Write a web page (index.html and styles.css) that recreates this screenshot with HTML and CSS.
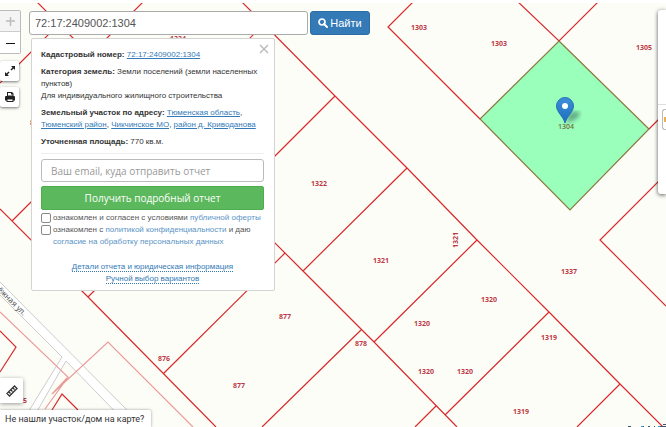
FILE: index.html
```
<!DOCTYPE html>
<html lang="ru">
<head>
<meta charset="utf-8">
<title>Кадастровая карта</title>
<link rel="stylesheet" href="styles.css">
</head>
<body>
<main class="app">
  <svg class="map" width="666" height="427" viewBox="0 0 666 427" role="img" aria-label="Карта участков">
    <g class="road">
      <path class="road-fill" d="M0 282 127 410 144 427H130L66 361 38 409 28 427H19L62 357 0 295Z"/>
      <path class="road-edge" d="M0 282 144 427M0 295 62 357 19 427M130 427 66 361 28 427"/>
    </g>
    <text class="street" transform="translate(-3 290) rotate(45)">ёжная ул.</text>
    <path class="parcel-faint" d="M0 312 68 377 45 409M52 394 108 342 193 427M52 394 68 377"/>
    <path class="parcel" d="M240 0 335 96 407 168 477 240 549 312 620 384 663 427M335 96 275 156 220 210M407 168 303 271M220 188 303 271 374 342 457 427M285 253 163 374M477 240 374 342M361 330 262 427M549 312 445 415M436 406 415 427M620 384 577 427M0 209 88 297 216 427M12 221 90 143M88 297 130 255M145 0 90 55M35 0 90 55M59 24 0 83M264 24 220 68M415 0 388 27 480 119M516 0 559 41 600 0M649 129 666 112M666 174 600 240 666 306M0 331 16 347 0 372M52 410 62 394 78 410"/>
    <path class="selected" d="M559 41 649 129 570 210 480 119Z"/>
    <g class="labels">
      <text x="419" y="30">1303</text><text x="499" y="46">1303</text><text x="644" y="50">1305</text>
      <text x="178" y="41">1324</text><text x="319" y="186">1322</text><text x="381" y="263">1321</text>
      <text transform="translate(458 240) rotate(-90)">1321</text>
      <text x="569" y="274">1337</text><text x="489" y="302">1320</text><text x="422" y="326">1320</text>
      <text x="549" y="340">1319</text><text x="426" y="374">1320</text><text x="465" y="374">1320</text>
      <text x="521" y="414">1319</text><text x="285" y="319">877</text><text x="239" y="388">877</text>
      <text x="361" y="346">878</text><text x="164" y="361">876</text><text x="21" y="403">875</text><text x="32" y="125">8</text>
    </g>
    <text class="label-selected" x="566" y="129">1304</text>
    <path stroke="#456" d="M628 426.500H631M641 426.500H644M648 426.500H650M654 426.500H655M658 426.500H666M663 424.500H666"/>
    <path stroke="#29a3d0" d="M641 426.500H643M658 426.500H660"/>
    <defs>
      <linearGradient id="pin" x2="0" y2="1"><stop stop-color="#3c8fd8"/><stop offset="1" stop-color="#1d6dbd"/></linearGradient>
      <filter id="soft"><feGaussianBlur stdDeviation="2"/></filter>
    </defs>
    <path filter="url(#soft)" fill="#244" opacity=".45" d="M566 123 569 114Q576 109 580 113 580 119 566 123Z"/>
    <path fill="url(#pin)" stroke="#2a72b5" d="M565 123C563 116 556.500 112 556.500 106A8.500 8.500 0 0 1 573.500 106C573.500 112 567 116 565 123Z"/>
    <circle cx="565" cy="106" r="3" fill="#fff"/>
  </svg>

  <nav class="tools" aria-label="Инструменты карты">
    <div class="zoom">
      <button class="tool tool-off" disabled aria-label="Приблизить"><svg width="10" height="10"><path d="M1 5H10M5.500 1V10" stroke="#bbb" stroke-width="1.500"/></svg></button>
      <button class="tool" aria-label="Отдалить"><svg width="10" height="10"><path d="M1 5.500H10" stroke="#111"/></svg></button>
    </div>
    <button class="tool tool-card" aria-label="Во весь экран"><svg width="12" height="12" viewBox="0 0 12 12"><path fill="#222" d="M7 1H11V5L9.500 3.500 7.500 5.500 6.500 4.500 8.500 2.500ZM1 7 2.500 8.500 4.500 6.500 5.500 7.500 3.500 9.500 5 11H1Z"/></svg></button>
    <button class="tool tool-card" aria-label="Печать"><svg width="12" height="12" viewBox="0 0 12 12"><path fill="#222" fill-rule="evenodd" d="M3 1H8L9.500 2.500V5H10Q11 5 11 6V9.500H9.500V11H2.500V9.500H1V6Q1 5 2 5H3ZM4 2V4.500H8.500V3.500H7V2ZM3.500 8.500V10H8.500V8.500Z"/></svg></button>
  </nav>

  <form class="search">
    <input class="search-box" type="text" value="72:17:2409002:1304" aria-label="Кадастровый номер или адрес">
    <button class="search-button" type="button"><svg width="10" height="10" viewBox="0 0 10 10"><circle cx="4" cy="4" r="3" fill="none" stroke="#fff" stroke-width="1.700"/><path d="M6 6 9 9" stroke="#fff" stroke-width="2" stroke-linecap="round"/></svg>Найти</button>
  </form>

  <section class="card">
    <button class="close" aria-label="Закрыть"><svg width="10" height="10"><path d="M1 1 9 9M9 1 1 9" stroke="#bbb" stroke-width="1.500"/></svg></button>
    <p><b>Кадастровый номер:</b> <a href="#number">72:17:2409002:1304</a></p>
    <p><b>Категория земель:</b> Земли поселений (земли населенных пунктов)<br>Для индивидуального жилищного строительства</p>
    <p><b>Земельный участок по адресу:</b> <a href="#region">Тюменская область</a>, <a href="#district">Тюменский район</a>, <a href="#mo">Чикчинское МО</a>, <a href="#area">район д. Криводанова</a></p>
    <p><b>Уточненная площадь:</b> 770 кв.м.</p>
    <form class="order">
      <input class="email" type="email" placeholder="Ваш email, куда отправить отчет" aria-label="Email">
      <button class="submit" type="button">Получить подробный отчет</button>
      <div class="agree"><input type="checkbox" id="offer"><label for="offer">ознакомлен и согласен с условиями <a href="#offer-text">публичной оферты</a></label></div>
      <div class="agree"><input type="checkbox" id="privacy"><label for="privacy">ознакомлен с <a href="#privacy-text">политикой конфиденциальности</a> и даю <a href="#consent">согласие на обработку персональных данных</a></label></div>
    </form>
    <div class="more"><a href="#details">Детали отчета и юридическая информация</a><br><a href="#manual">Ручной выбор вариантов</a></div>
  </section>

  <aside class="layers"><div class="layers-body"><div class="layers-item"></div></div></aside>
  <button class="tool ruler" aria-label="Линейка"><svg width="12" height="12" viewBox="0 0 12 12"><path fill="#fff" stroke="#333" stroke-width="1.300" d="M1 8.500 8.500 1 11 3.500 3.500 11ZM3 7 4.500 8.500M5 5 6.500 6.500M7 3 8.500 4.500"/></svg></button>
  <button class="help">Не нашли участок/дом на карте?</button>
</main>
</body>
</html>
```
FILE: styles.css
```
* { box-sizing: border-box; }
body { margin: 0; background: #fff; font-family: "Liberation Sans", Arial, sans-serif; }
button, input { font-family: inherit; margin: 0; }
button { cursor: pointer; }
svg { fill: none; }
.app { position: relative; min-height: 100vh; overflow: hidden; border-top: 3px solid #fff; background: #fcfdf7; }

.map { position: absolute; left: 0; top: -3px; clip-path: inset(3px 0 0 0); }
.parcel { stroke: #d8292c; stroke-width: 1.2; }
.parcel-faint { stroke: #eb9c9a; stroke-width: 1.2; }
.selected { fill: #99ffbb; stroke: #8c7840; stroke-width: 1.2; }
.road-fill { fill: #fff; }
.road-edge { stroke: #ccc; }
.street { fill: #555; font: 8px "Noto Sans", sans-serif; }
.labels text, .label-selected { font: 700 7px "Open Sans", "Noto Sans", sans-serif; text-anchor: middle; fill: #bc3a3f; }
.labels text { stroke: #fff; stroke-width: 1px; paint-order: stroke; }
.label-selected { font-weight: 600; fill: #77713c; }

.tools { position: absolute; left: 0; top: 7px; display: flex; flex-direction: column; align-items: flex-start; gap: 6px; }
.zoom { display: flex; flex-direction: column; margin-bottom: 1px; border: 1px solid #bbb; border-left: 0; border-radius: 0 2px 2px 0; }
.tool { display: flex; align-items: center; justify-content: center; width: 20px; height: 21px; padding: 0; border: 0; background: #fff; }
.tool-off { border-bottom: 1px solid #ccc; background: #f4f4f4; }
.tool-card { width: 19px; height: 20px; border-radius: 2px; box-shadow: 0 1px 3px #0008; }

.search { position: absolute; left: 29px; top: 8px; display: flex; gap: 2px; }
.search-box { width: 279px; height: 24px; padding: 0 5px; border: 1px solid #aaa; border-radius: 3px; background: #fff; color: #555; font-size: 11px; }
.search-button { display: flex; align-items: center; justify-content: center; gap: 2px; width: 60px; height: 24px; padding: 0; border: 1px solid #2e6da4; border-radius: 3px; background: #337ab7; color: #fff; font-size: 11px; }

.card { position: absolute; left: 31px; top: 35px; width: 244px; padding: 10px 10px 5px 9px; border: 1px solid #d4d4d4; border-radius: 2px; background: #fff; color: #333; font-size: 8px; line-height: 12px; }
.card p { margin: 0 0 5px; }
.card a { color: #337ab7; text-decoration: underline; }
.close { position: absolute; right: 5px; top: 5px; display: flex; padding: 0; border: 0; background: none; }
.order { padding-top: 5px; border-top: 1px solid #eee; }
.email { display: block; width: 100%; height: 23px; margin-bottom: 4px; padding: 0 9px; border: 1px solid #bbb; border-radius: 3px; font-family: "Open Sans", sans-serif; font-size: 10px; }
.email::placeholder { color: #999; }
.submit { display: block; width: 100%; height: 24px; margin-bottom: 2px; border: 1px solid #4cae4c; border-radius: 2px; background: #5cb85c; color: #fff; font-family: "Open Sans", sans-serif; font-size: 10px; }
.card .agree { display: flex; gap: 2px; color: #555; }
.agree input { flex: none; appearance: none; width: 10px; height: 10px; margin-top: 1px; border: 1px solid #888; border-radius: 2px; background: #fff; }
.card .agree a { color: #5a94c6; text-decoration: none; }
.more { margin-top: 13px; text-align: center; }
.card .more a { border-bottom: 1px dotted #337ab7; text-decoration: none; }

.layers { position: absolute; right: 0; top: 7px; width: 8px; height: 184px; padding-top: 94px; border-radius: 3px 0 0 3px; background: #fff; box-shadow: 0 1px 4px #000a; }
.layers-body { padding: 4px 0 0 4px; border-top: 1px solid #ddd; }
.layers-item { height: 21px; border: 1px solid #bbb; border-right: 0; border-radius: 3px 0 0 3px; background: linear-gradient(#f0ad4e, #f0ad4e) 1px 7px / 3px 5px no-repeat; }
.ruler { position: absolute; left: 0; bottom: 24px; width: 23px; height: 25px; border-radius: 0 2px 2px 0; box-shadow: 0 1px 4px #0006; }
.help { position: absolute; left: 0; bottom: 0; height: 17px; padding: 0 7px 0 5px; border: 0; border-radius: 0 2px 0 0; background: #fff; box-shadow: 0 0 3px #0006; color: #333; font-family: Roboto, sans-serif; font-size: 9px; }
```
